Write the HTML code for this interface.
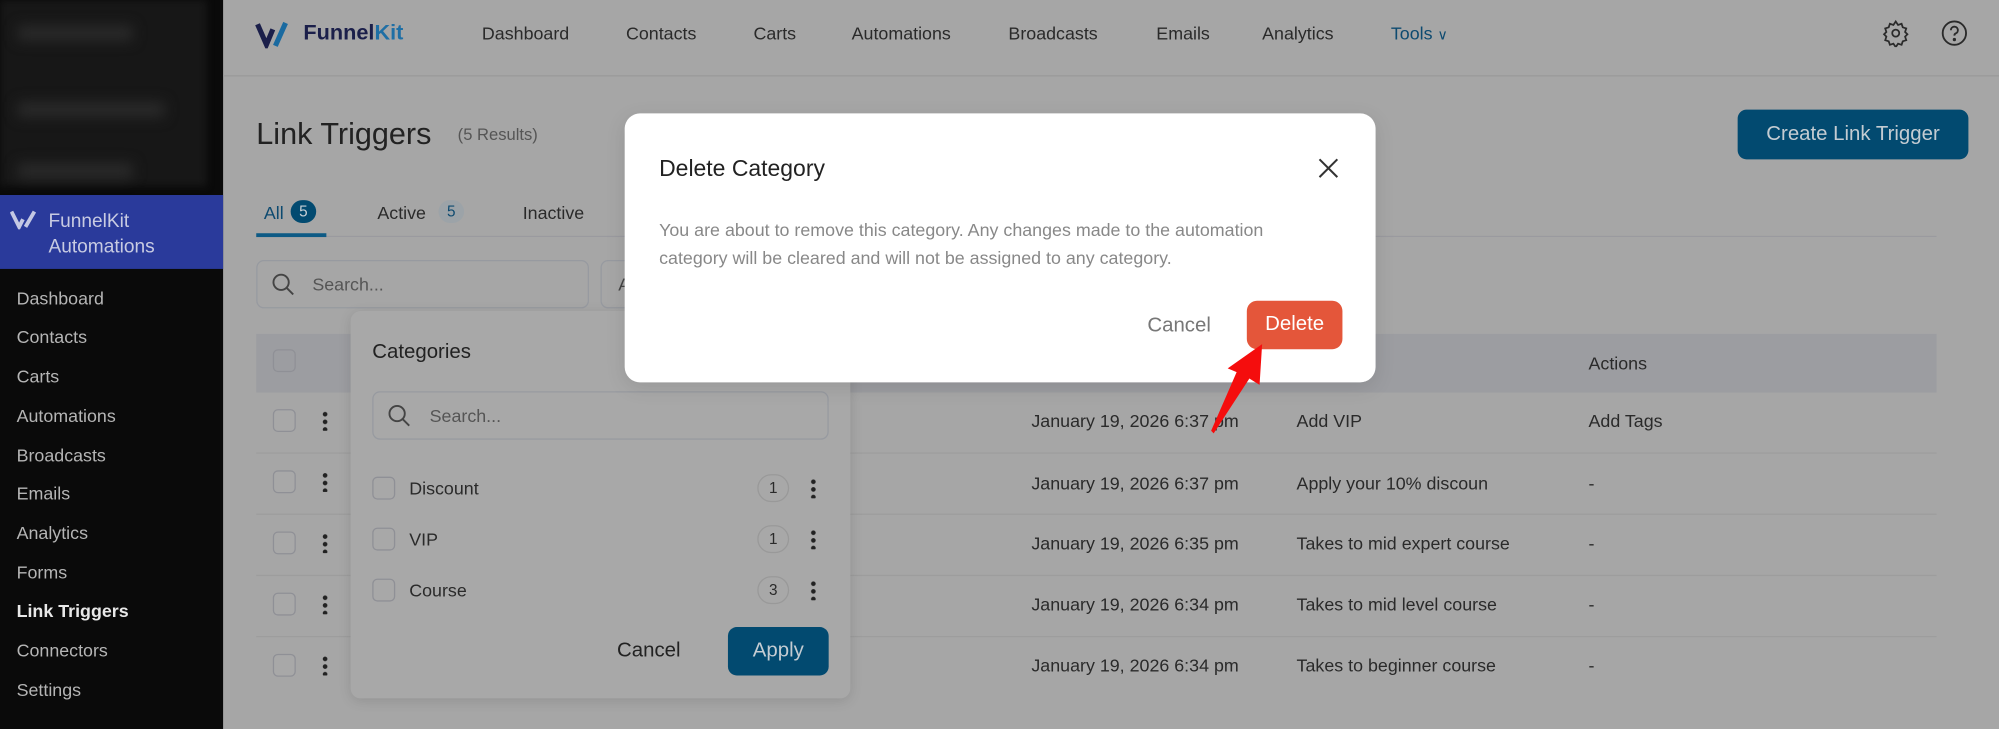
<!DOCTYPE html>
<html><head><meta charset="utf-8"><style>
*{margin:0;padding:0;box-sizing:border-box}
html,body{width:1999px;height:729px;overflow:hidden;background:#a6a6a6}
#w{width:1568px;height:572px;position:relative;transform:scale(1.27487,1.2745);transform-origin:0 0;font-family:"Liberation Sans",sans-serif;color:#2a2a2a}
.a{position:absolute;white-space:nowrap}
.sb{left:0;top:0;width:175px;height:572px;background:#0a0a0a}
.mi{left:13px;font-size:14px;color:#b5b5b5}
.nv{top:18px;font-size:14px;color:#2a2a2a}
.cb{width:18px;height:18px;border:1.5px solid #8f9096;border-radius:4px;background:#a8a8a8}
.dots{width:4px;height:16px;background:radial-gradient(circle,#222 1.6px,transparent 2px) 0 0/4px 6px repeat-y}
.row{font-size:14px;color:#2a2a2a}
.sep{left:201px;width:1318px;height:1px;background:#9d9d9d}
</style></head><body><div id="w">
<div class="a sb"></div>
<div class="a" style="left:0;top:0;width:162px;height:146px;background:#171717;filter:blur(3px)"></div>
<div class="a" style="left:14px;top:20px;width:90px;height:12px;background:#2a2a2a;filter:blur(5px)"></div>
<div class="a" style="left:14px;top:80px;width:115px;height:12px;background:#2a2a2a;filter:blur(5px)"></div>
<div class="a" style="left:14px;top:128px;width:90px;height:12px;background:#2a2a2a;filter:blur(5px)"></div>
<div class="a" style="left:0;top:153px;width:175px;height:58px;background:#2a3a9b"></div>
<svg class="a" style="left:8px;top:164px" width="24" height="16" viewBox="0 0 24 16"><path d="M1 2l6 12 3-6M12 14L19 2" stroke="#c4c8e4" stroke-width="3" fill="none"/></svg>
<div class="a" style="left:38px;top:164px;font-size:15px;color:#c8cbe2;line-height:20px">FunnelKit<br>Automations</div>
<div class="a mi" style="top:226px">Dashboard</div>
<div class="a mi" style="top:256px">Contacts</div>
<div class="a mi" style="top:287px">Carts</div>
<div class="a mi" style="top:318px">Automations</div>
<div class="a mi" style="top:349px">Broadcasts</div>
<div class="a mi" style="top:379px">Emails</div>
<div class="a mi" style="top:410px">Analytics</div>
<div class="a mi" style="top:441px">Forms</div>
<div class="a mi" style="top:471px;color:#e8e8e8;font-weight:bold">Link Triggers</div>
<div class="a mi" style="top:502px">Connectors</div>
<div class="a mi" style="top:533px">Settings</div>

<div class="a" style="left:175px;top:59px;width:1393px;height:1px;background:#9a9a9a"></div>
<svg class="a" style="left:200px;top:16px" width="36" height="22" viewBox="0 0 36 22"><path d="M2 3l7 16 5-12" stroke="#1b1f4a" stroke-width="4" fill="none"/><path d="M16 20L24 2" stroke="#1a6aa0" stroke-width="4"/></svg>
<div class="a" style="left:238px;top:16px;font-size:17px;font-weight:bold;color:#1b1f4a">Funnel<span style="color:#1f6fa5">Kit</span></div>
<div class="a nv" style="left:378px">Dashboard</div>
<div class="a nv" style="left:491px">Contacts</div>
<div class="a nv" style="left:591px">Carts</div>
<div class="a nv" style="left:668px">Automations</div>
<div class="a nv" style="left:791px">Broadcasts</div>
<div class="a nv" style="left:907px">Emails</div>
<div class="a nv" style="left:990px">Analytics</div>
<div class="a nv" style="left:1091px;color:#0d4a70">Tools <span style="font-size:11px">&#8744;</span></div>
<svg class="a" style="left:1476px;top:15px" width="22" height="22" viewBox="0 0 24 24" fill="none" stroke="#2a2a2a" stroke-width="1.5"><circle cx="12" cy="12" r="3"/><path d="M12 2l2 3 3-1 1 3 3 1-1 3 2 2-2 2 1 3-3 1-1 3-3-1-2 3-2-3-3 1-1-3-3-1 1-3-2-2 2-2-1-3 3-1 1-3 3 1z"/></svg>
<svg class="a" style="left:1522px;top:15px" width="22" height="22" viewBox="0 0 24 24" fill="none" stroke="#2a2a2a" stroke-width="1.6"><circle cx="12" cy="12" r="10"/><path d="M9 9.5a3 3 0 1 1 4 2.8c-.8.4-1 1-1 1.8"/><circle cx="12" cy="17.5" r=".6" fill="#2a2a2a"/></svg>

<div class="a" style="left:201px;top:92px;font-size:24px;color:#222">Link Triggers</div>
<div class="a" style="left:359px;top:98px;font-size:13px;color:#555">(5 Results)</div>
<div class="a" style="left:1363px;top:86px;width:181px;height:39px;background:#024a70;border-radius:7px;color:#c4ccd2;font-size:16px;text-align:center;line-height:39px">Create Link Trigger</div>

<div class="a" style="left:201px;top:185px;width:1318px;height:1px;background:#9a9a9f"></div>
<div class="a" style="left:201px;top:183px;width:55px;height:3px;background:#0d5a85"></div>
<div class="a" style="left:207px;top:159px;font-size:14px;color:#0d4a70">All</div>
<div class="a" style="left:228px;top:157px;width:20px;height:18px;border-radius:9px;background:#024a70;color:#c8d0d6;font-size:12px;text-align:center;line-height:18px">5</div>
<div class="a" style="left:296px;top:159px;font-size:14px">Active</div>
<div class="a" style="left:344px;top:157px;width:20px;height:18px;border-radius:9px;background:#9ca3a8;color:#0d4a70;font-size:12px;text-align:center;line-height:18px">5</div>
<div class="a" style="left:410px;top:159px;font-size:14px">Inactive</div>

<div class="a" style="left:201px;top:204px;width:261px;height:38px;border:1px solid #979aa0;border-radius:6px"></div>
<svg class="a" style="left:212px;top:213px" width="20" height="20" viewBox="0 0 20 20" fill="none" stroke="#444" stroke-width="1.5"><circle cx="8.5" cy="8.5" r="6"/><path d="M13 13l5 5"/></svg>
<div class="a" style="left:245px;top:215px;font-size:14px;color:#555">Search...</div>
<div class="a" style="left:471px;top:204px;width:40px;height:38px;border:1px solid #979aa0;border-radius:6px"></div>
<div class="a" style="left:485px;top:215px;font-size:14px;color:#444">A</div>

<div class="a" style="left:201px;top:262px;width:1318px;height:46px;background:#9c9da1"></div>
<div class="a cb" style="left:214px;top:274px;background:#9c9da1"></div>
<div class="a row" style="left:1062px;top:277px">on</div>
<div class="a row" style="left:1246px;top:277px">Actions</div>

<div class="a sep" style="top:355px"></div><div class="a sep" style="top:403px"></div><div class="a sep" style="top:451px"></div><div class="a sep" style="top:499px"></div>
<div class="a cb" style="left:214px;top:321px"></div><div class="a dots" style="left:253px;top:322px"></div>
<div class="a cb" style="left:214px;top:369px"></div><div class="a dots" style="left:253px;top:370px"></div>
<div class="a cb" style="left:214px;top:417px"></div><div class="a dots" style="left:253px;top:418px"></div>
<div class="a cb" style="left:214px;top:465px"></div><div class="a dots" style="left:253px;top:466px"></div>
<div class="a cb" style="left:214px;top:513px"></div><div class="a dots" style="left:253px;top:514px"></div>
<div class="a row" style="left:809px;top:322px">January 19, 2026 6:37 pm</div><div class="a row" style="left:1017px;top:322px">Add VIP</div><div class="a row" style="left:1246px;top:322px">Add Tags</div>
<div class="a row" style="left:809px;top:371px">January 19, 2026 6:37 pm</div><div class="a row" style="left:1017px;top:371px">Apply your 10% discoun</div><div class="a row" style="left:1246px;top:371px">-</div>
<div class="a row" style="left:809px;top:418px">January 19, 2026 6:35 pm</div><div class="a row" style="left:1017px;top:418px">Takes to mid expert course</div><div class="a row" style="left:1246px;top:418px">-</div>
<div class="a row" style="left:809px;top:466px">January 19, 2026 6:34 pm</div><div class="a row" style="left:1017px;top:466px">Takes to mid level course</div><div class="a row" style="left:1246px;top:466px">-</div>
<div class="a row" style="left:809px;top:514px">January 19, 2026 6:34 pm</div><div class="a row" style="left:1017px;top:514px">Takes to beginner course</div><div class="a row" style="left:1246px;top:514px">-</div>

<div class="a" style="left:275px;top:244px;width:392px;height:304px;background:#a8a8a8;border-radius:8px;box-shadow:0 2px 10px rgba(0,0,0,.12)"></div>
<div class="a" style="left:292px;top:268px;font-size:16px;color:#222">Categories</div>
<div class="a" style="left:292px;top:307px;width:358px;height:38px;border:1px solid #979aa0;border-radius:6px"></div>
<svg class="a" style="left:303px;top:316px" width="20" height="20" viewBox="0 0 20 20" fill="none" stroke="#444" stroke-width="1.5"><circle cx="8.5" cy="8.5" r="6"/><path d="M13 13l5 5"/></svg>
<div class="a" style="left:337px;top:318px;font-size:14px;color:#555">Search...</div>
<div class="a cb" style="left:292px;top:374px"></div><div class="a row" style="left:321px;top:375px">Discount</div>
<div class="a cb" style="left:292px;top:414px"></div><div class="a row" style="left:321px;top:415px">VIP</div>
<div class="a cb" style="left:292px;top:454px"></div><div class="a row" style="left:321px;top:455px">Course</div>
<div class="a" style="left:594px;top:372px;width:25px;height:22px;border:1px solid #999;border-radius:11px;font-size:12px;text-align:center;line-height:20px">1</div><div class="a dots" style="left:636px;top:375px"></div>
<div class="a" style="left:594px;top:412px;width:25px;height:22px;border:1px solid #999;border-radius:11px;font-size:12px;text-align:center;line-height:20px">1</div><div class="a dots" style="left:636px;top:415px"></div>
<div class="a" style="left:594px;top:452px;width:25px;height:22px;border:1px solid #999;border-radius:11px;font-size:12px;text-align:center;line-height:20px">3</div><div class="a dots" style="left:636px;top:455px"></div>
<div class="a" style="left:484px;top:502px;font-size:16px;color:#222">Cancel</div>
<div class="a" style="left:571px;top:492px;width:79px;height:38px;background:#024a70;border-radius:7px;color:#c4ccd2;font-size:16px;text-align:center;line-height:38px">Apply</div>

<div class="a" style="left:490px;top:89px;width:589px;height:211px;background:#fff;border-radius:12px;box-shadow:0 4px 16px rgba(0,0,0,.1)"></div>
<div class="a" style="left:517px;top:122px;font-size:18px;color:#222">Delete Category</div>
<svg class="a" style="left:1033px;top:123px" width="18" height="18" viewBox="0 0 18 18" stroke="#333" stroke-width="1.6"><path d="M2 2l14 14M16 2L2 16"/></svg>
<div class="a" style="left:517px;top:169px;font-size:14px;color:#888;line-height:22px">You are about to remove this category. Any changes made to the automation<br>category will be cleared and will not be assigned to any category.</div>
<div class="a" style="left:900px;top:247px;font-size:16px;color:#777">Cancel</div>
<div class="a" style="left:978px;top:236px;width:75px;height:38px;background:#e4563a;border-radius:8px;color:#fff;font-size:16px;text-align:center;line-height:38px">Delete</div>
<svg class="a" style="left:940px;top:262px" width="60" height="84" viewBox="0 0 60 84"><path d="M10 76L30 30 23 27 50 8 48 40 40 35 12 78z" fill="#f50d0d"/></svg>
</div></body></html>
